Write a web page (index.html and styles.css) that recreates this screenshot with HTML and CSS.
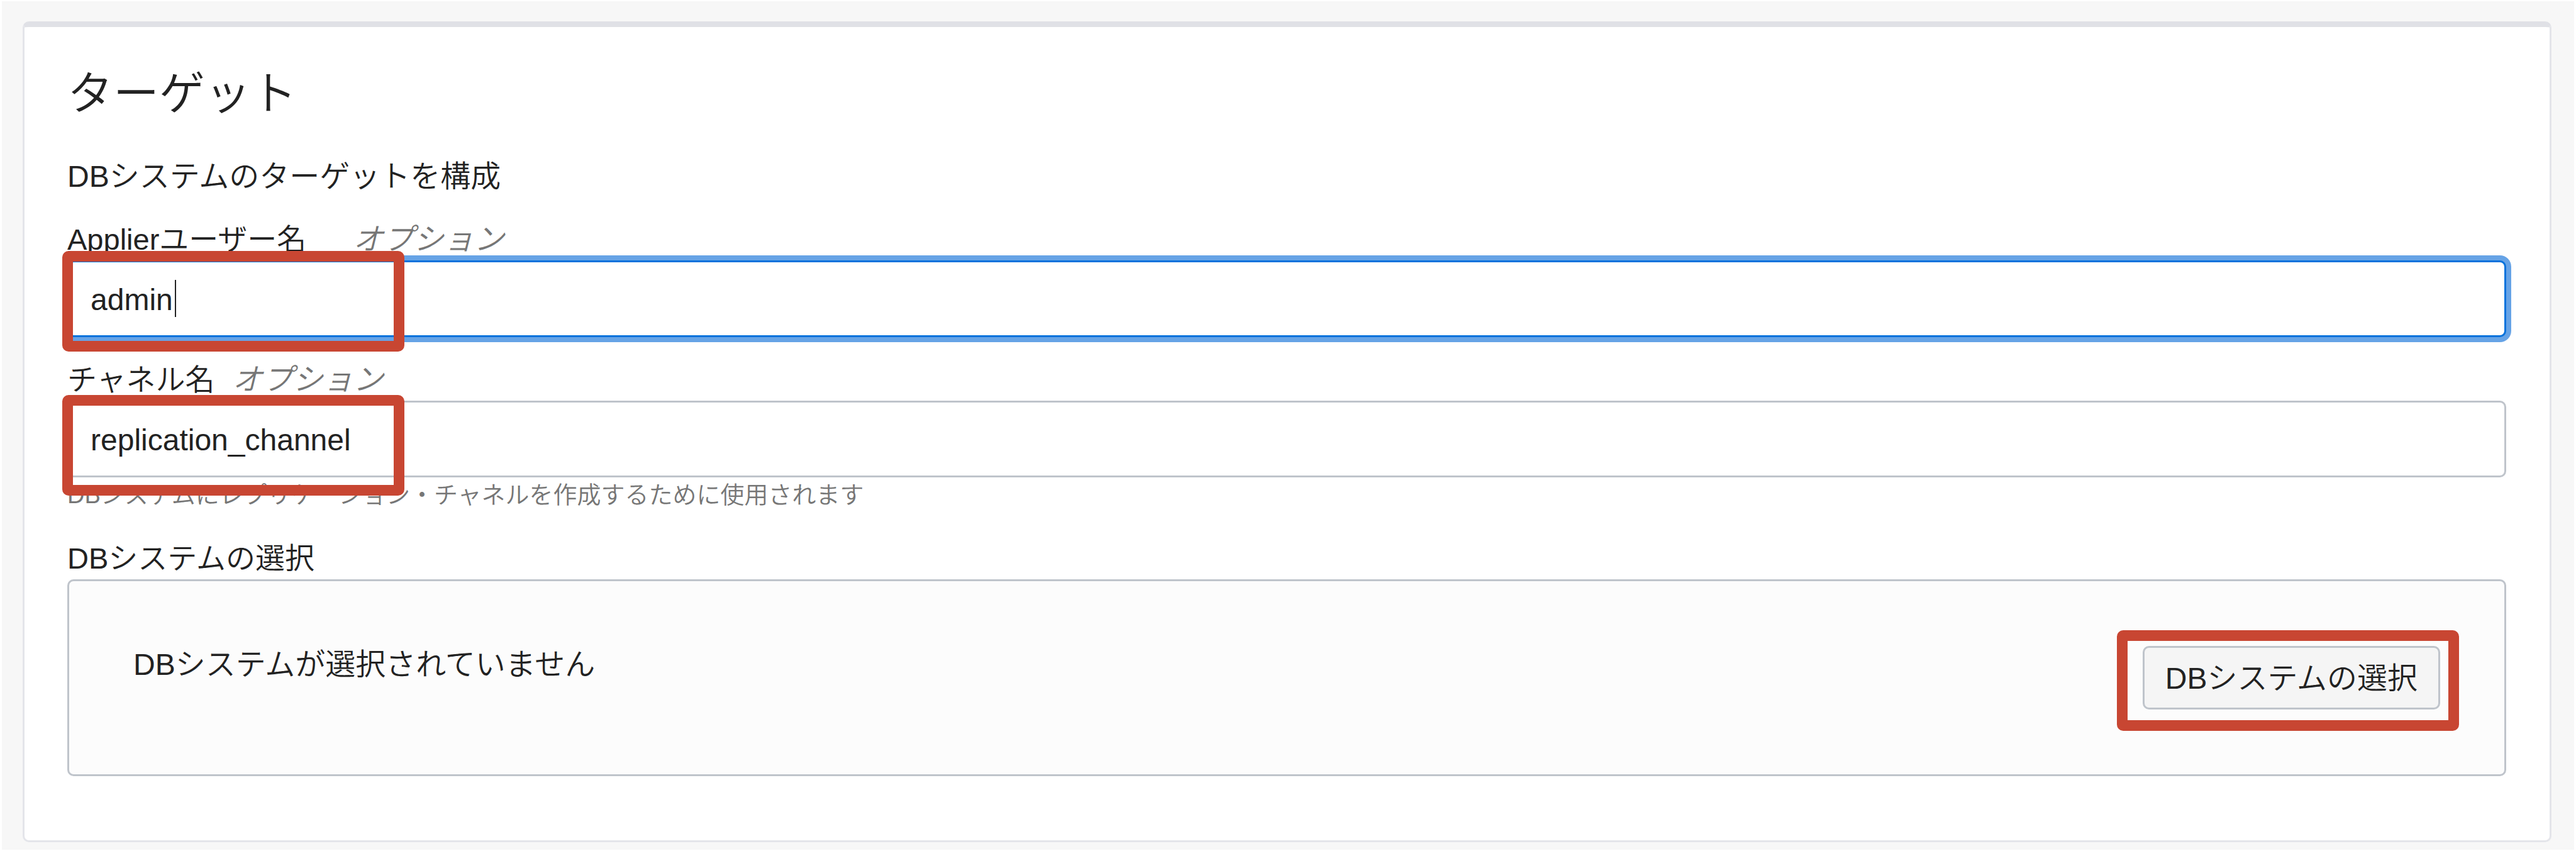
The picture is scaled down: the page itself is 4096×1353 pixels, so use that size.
FILE: index.html
```html
<!DOCTYPE html>
<html lang="ja">
<head>
<meta charset="utf-8">
<title>ターゲット</title>
<link rel="stylesheet" href="styles.css">
</head>
<body>
<main class="page">
  <form class="card">
    <h1 class="card-title">ターゲット</h1>
    <p class="card-description">DBシステムのターゲットを構成</p>

    <div class="field">
      <div class="field-label field-label-wide">
        <label for="applier-user">Applierユーザー名</label>
        <em class="optional">オプション</em>
      </div>
      <div class="control">
        <input class="text-input text-input-active" id="applier-user" type="text" value="admin">
        <span class="caret"></span>
        <span class="highlight highlight-user"></span>
      </div>
    </div>

    <div class="field">
      <div class="field-label">
        <label for="channel-name">チャネル名</label>
        <em class="optional">オプション</em>
      </div>
      <div class="control">
        <input class="text-input" id="channel-name" type="text" value="replication_channel" aria-describedby="channel-help">
        <span class="highlight highlight-channel"></span>
      </div>
      <p class="help" id="channel-help">DBシステムにレプリケーション・チャネルを作成するために使用されます</p>
    </div>

    <section class="field field-system" aria-labelledby="system-label">
      <div class="field-label" id="system-label">DBシステムの選択</div>
      <div class="system-panel">
        <p class="system-empty">DBシステムが選択されていません</p>
        <div class="control">
          <button class="button" type="button">DBシステムの選択</button>
          <span class="highlight highlight-button"></span>
        </div>
      </div>
    </section>
  </form>
</main>
</body>
</html>
```

FILE: styles.css
```css
* {
  box-sizing: border-box;
}

body {
  margin: 0;
  background: #ffffff;
  color: #222222;
  font-family: "Liberation Sans", "Noto Sans CJK JP", sans-serif;
  font-size: 48px;
  font-weight: 350;
  line-height: 60px;
}

h1,
p {
  margin: 0;
  font-weight: inherit;
}

.page {
  display: flex;
  min-height: 100vh;
  padding: 32px 36px 12px 33px;
  border: solid #ffffff;
  border-width: 2px 3px;
  background: #f7f7f7;
}

.card {
  flex: 1;
  padding: 56px 69px 100px 68px;
  border: 3px solid #e4e5ea;
  border-top: 9px solid #e0e1e6;
  border-radius: 10px;
  background: #ffffff;
}

.card-title {
  margin-bottom: 52px;
  font-size: 73px;
  line-height: 100px;
}

.card-description {
  margin-bottom: 40px;
}

.field {
  margin-bottom: 38px;
}

.field-system {
  margin-top: 47px;
  margin-bottom: 0;
}

.field-label {
  display: flex;
  gap: 28px;
  margin-bottom: 3px;
  font-size: 47px;
}

.field-label-wide {
  gap: 74px;
}

.optional {
  color: #767676;
  font-size: 48px;
  font-style: italic;
}

.control {
  position: relative;
}

.text-input {
  display: block;
  width: 100%;
  height: 122px;
  padding: 2px 34px 0;
  border: 3px solid #bfc4cb;
  border-radius: 10px;
  outline: none;
  background: #ffffff;
  color: inherit;
  font: inherit;
}

.text-input-active {
  border-color: #0572dc;
  box-shadow: 0 0 0 8px #66a3e6;
}

.caret {
  position: absolute;
  top: 31px;
  left: 171px;
  width: 2px;
  height: 59px;
  background: #222222;
}

.help {
  margin-top: 4px;
  color: #767676;
  font-size: 38px;
  line-height: 48px;
}

.system-panel {
  display: flex;
  align-items: flex-start;
  justify-content: space-between;
  padding: 103px 102px;
  border: 3px solid #bfc4cb;
  border-radius: 10px;
  background: #fcfcfc;
}

.button {
  display: block;
  height: 101px;
  padding: 2px 33px 0;
  border: 3px solid #bfc4cb;
  border-radius: 10px;
  background: #f5f5f5;
  color: inherit;
  font: inherit;
}

/* Call-out frames laid over the controls */
.highlight {
  position: absolute;
  width: 544px;
  height: 160px;
  border: 17px solid #c84632;
  border-radius: 10px;
  pointer-events: none;
}

.highlight-user {
  top: -15px;
  left: -8px;
}

.highlight-channel {
  top: -9px;
  left: -8px;
}

.highlight-button {
  top: -25px;
  left: -41px;
}
```
